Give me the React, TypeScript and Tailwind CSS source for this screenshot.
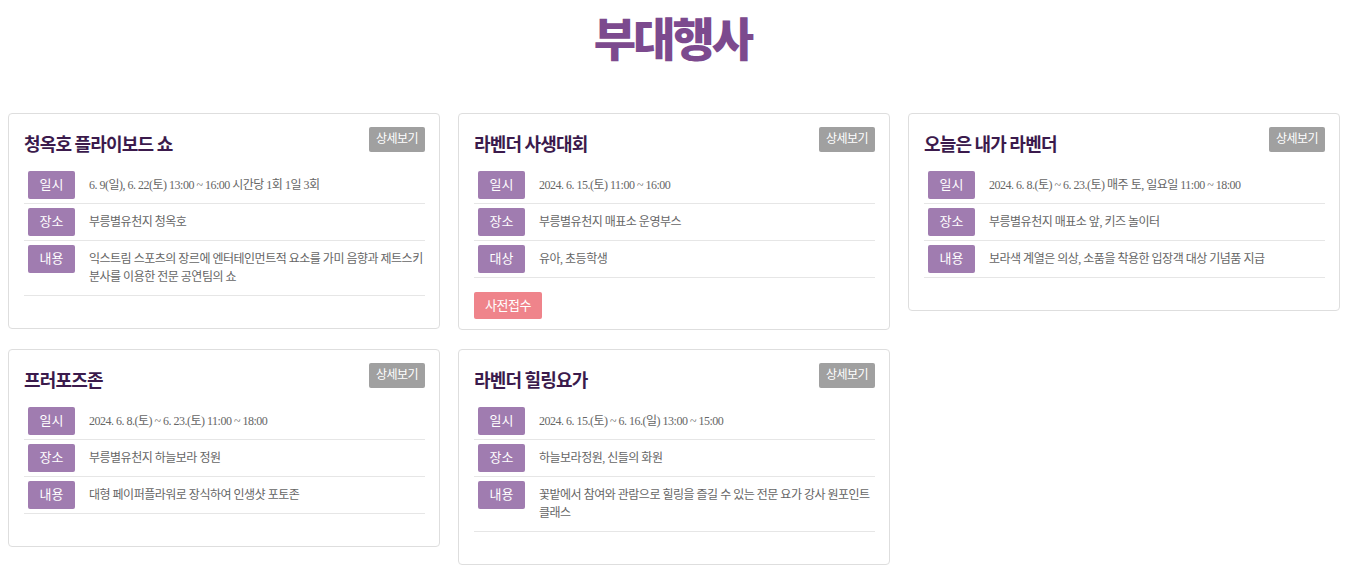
type Row = { label: string; text: string };

type Event = {
  title: string;
  rows: Row[];
  apply?: boolean;
};

const events: Event[] = [
  {
    title: "청옥호 플라이보드 쇼",
    rows: [
      { label: "일시", text: "6. 9(일), 6. 22(토) 13:00 ~ 16:00 시간당 1회 1일 3회" },
      { label: "장소", text: "부릉별유천지 청옥호" },
      {
        label: "내용",
        text: "익스트림 스포츠의 장르에 엔터테인먼트적 요소를 가미 음향과 제트스키 분사를 이용한 전문 공연팀의 쇼",
      },
    ],
  },
  {
    title: "라벤더 사생대회",
    rows: [
      { label: "일시", text: "2024. 6. 15.(토) 11:00 ~ 16:00" },
      { label: "장소", text: "부릉별유천지 매표소 운영부스" },
      { label: "대상", text: "유아, 초등학생" },
    ],
    apply: true,
  },
  {
    title: "오늘은 내가 라벤더",
    rows: [
      { label: "일시", text: "2024. 6. 8.(토) ~ 6. 23.(토) 매주 토, 일요일 11:00 ~ 18:00" },
      { label: "장소", text: "부릉별유천지 매표소 앞, 키즈 놀이터" },
      { label: "내용", text: "보라색 계열은 의상, 소품을 착용한 입장객 대상 기념품 지급" },
    ],
  },
  {
    title: "프러포즈존",
    rows: [
      { label: "일시", text: "2024. 6. 8.(토) ~ 6. 23.(토) 11:00 ~ 18:00" },
      { label: "장소", text: "부릉별유천지 하늘보라 정원" },
      { label: "내용", text: "대형 페이퍼플라워로 장식하여 인생샷 포토존" },
    ],
  },
  {
    title: "라벤더 힐링요가",
    rows: [
      { label: "일시", text: "2024. 6. 15.(토) ~ 6. 16.(일) 13:00 ~ 15:00" },
      { label: "장소", text: "하늘보라정원, 신들의 화원" },
      {
        label: "내용",
        text: "꽃밭에서 참여와 관람으로 힐링을 즐길 수 있는 전문 요가 강사 원포인트 클래스",
      },
    ],
  },
];

function EventCard({ event }: { event: Event }) {
  return (
    <div className="rounded-[4px] border border-[#dedede] bg-white px-[14px] pt-[13px] pb-[10px]">
      <div className="flex items-start justify-between">
        <h3
          className="pt-[3px] pl-[1px] text-[18px] font-bold leading-[26px] tracking-[-0.8px] text-[#3b1a4c]"
          style={{ fontFamily: '"Noto Sans CJK KR", sans-serif' }}
        >
          {event.title}
        </h3>
        <button
          type="button"
          className="h-[25px] w-[56px] rounded-[2px] bg-[#a0a0a0] text-[12px] leading-[25px] tracking-[-0.5px] text-white"
        >
          상세보기
        </button>
      </div>
      <ul className={event.apply ? "mt-[11px] ml-[1px]" : "mt-[11px] mb-[22px] ml-[1px]"}>
        {event.rows.map((row) => (
          <li key={row.label} className="flex items-start border-b border-[#e6e6e6] py-[4px] pl-[4px]">
            <span className="h-[28px] w-[47px] shrink-0 rounded-[2px] bg-[#a07cb0] text-center text-[13px] leading-[28px] text-white">
              {row.label}
            </span>
            <p className="break-keep py-[5px] pl-[14px] text-[12px] leading-[18px] tracking-[-0.5px] text-[#666]">
              {row.text}
            </p>
          </li>
        ))}
      </ul>
      {event.apply && (
        <button
          type="button"
          className="mt-[14px] ml-[1px] h-[27px] w-[68px] rounded-[2px] bg-[#ef848b] text-[13px] leading-[27px] tracking-[-0.5px] text-white"
        >
          사전접수
        </button>
      )}
    </div>
  );
}

export default function App() {
  return (
    <div
      className="min-h-screen bg-white"
      style={{ fontFamily: '"Liberation Serif", "Noto Sans CJK KR", serif' }}
    >
      <h1
        className="pt-[8px] text-center text-[46px] font-black leading-[56px] tracking-[-3px] text-[#7c4a8e]"
        style={{ fontFamily: '"Noto Sans CJK KR", sans-serif' }}
      >
        부대행사
      </h1>
      <div className="mt-[49px] ml-[8px] grid w-[1332px] grid-cols-3 items-start gap-x-[18px] gap-y-[19px]">
        {events.map((e) => (
          <EventCard key={e.title} event={e} />
        ))}
      </div>
    </div>
  );
}
